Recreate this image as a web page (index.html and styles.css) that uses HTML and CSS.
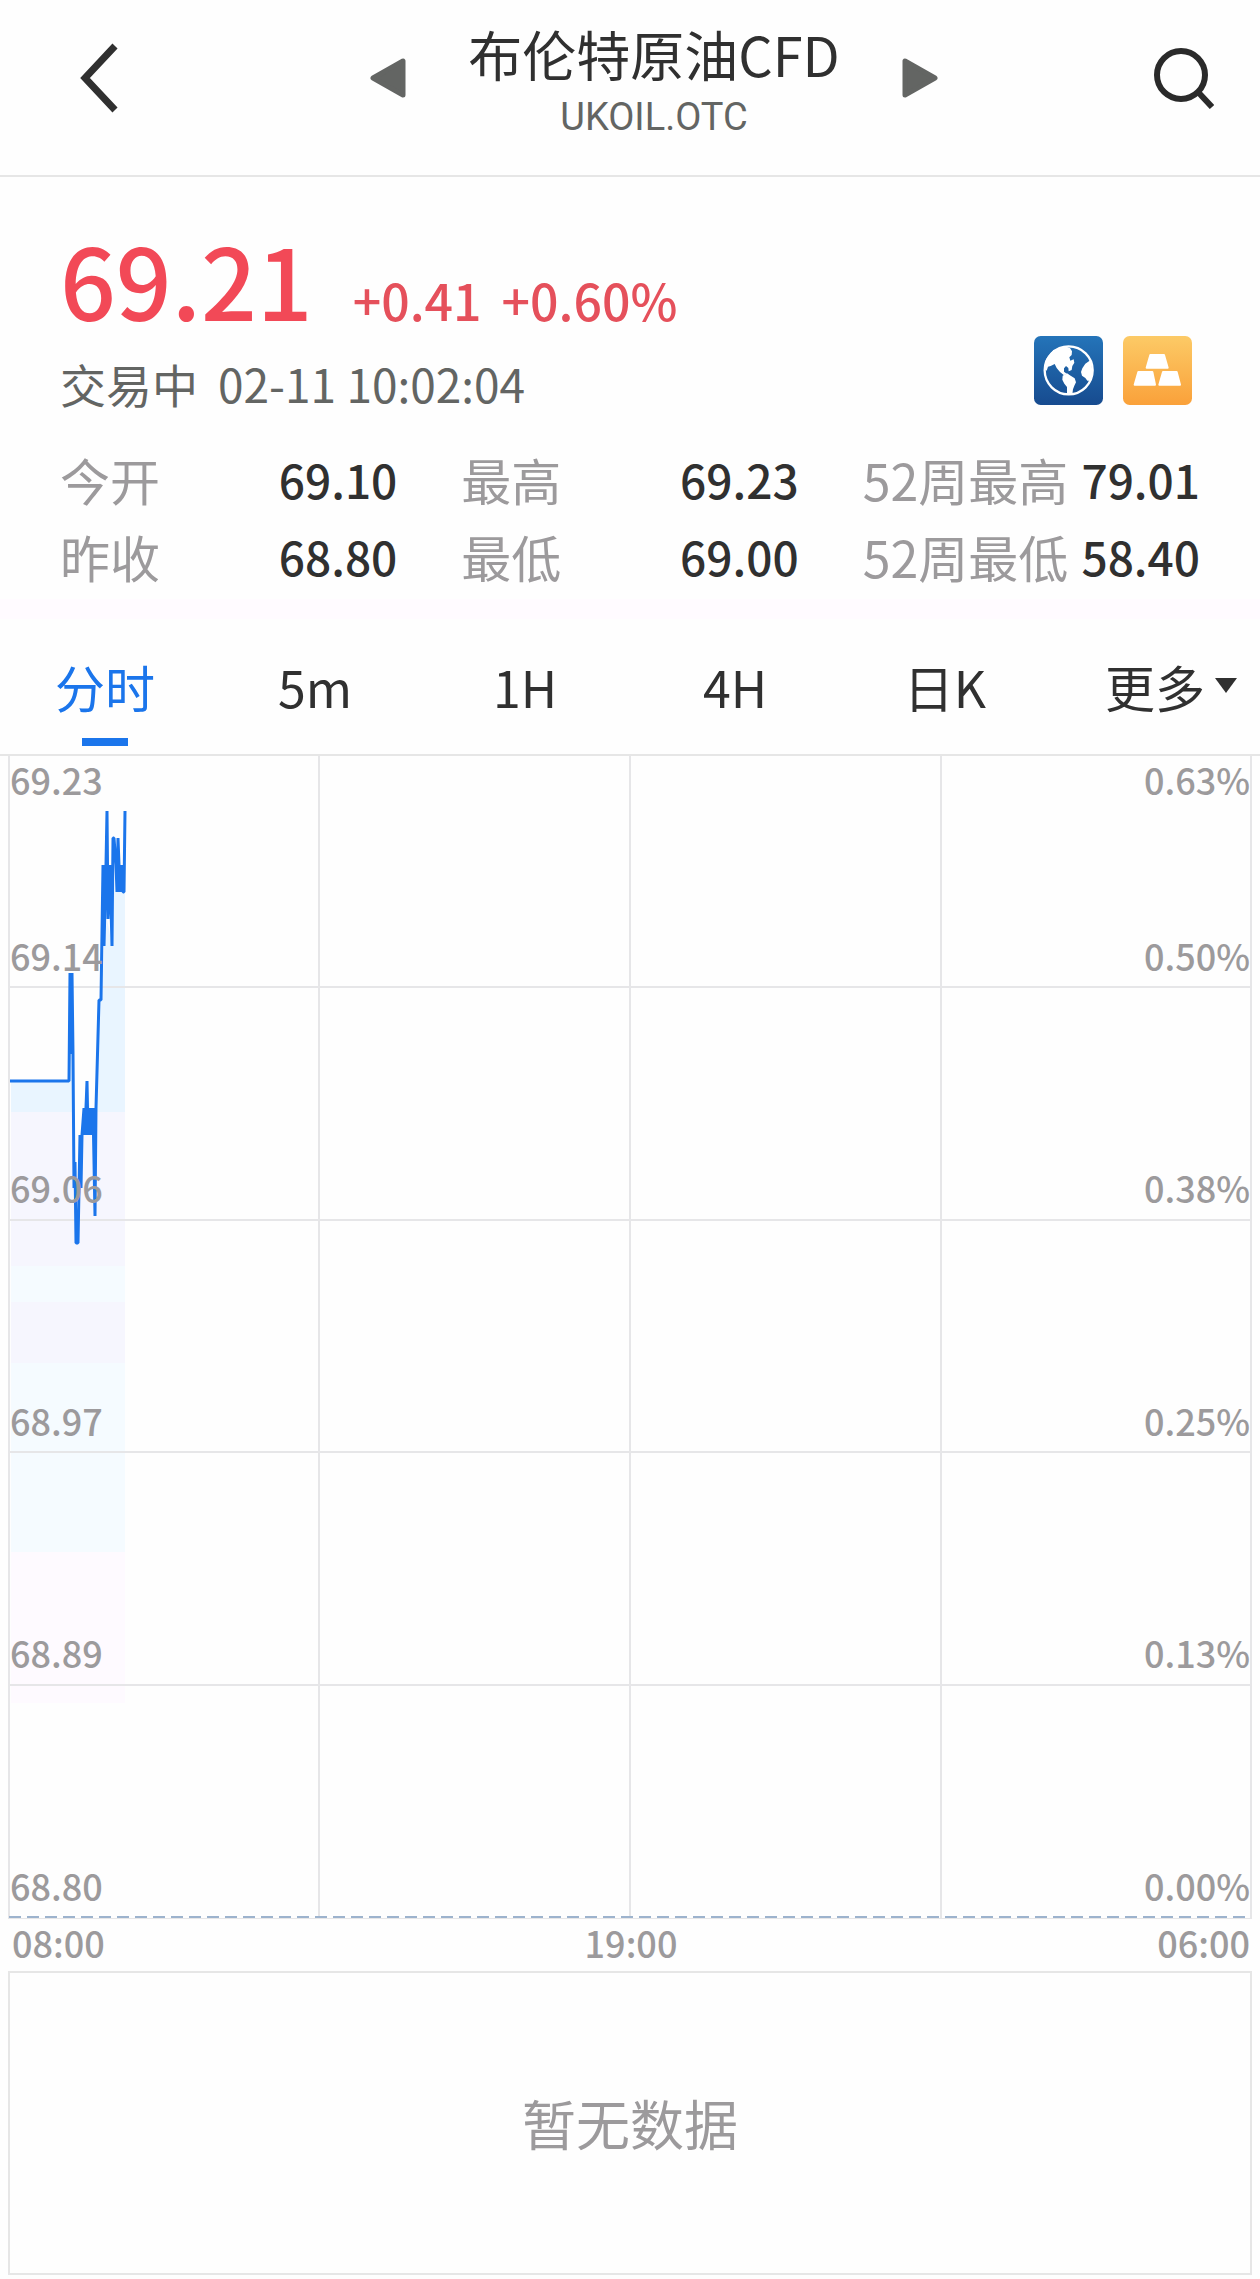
FILE: index.html
```html
<!DOCTYPE html>
<html lang="zh-CN">
<head>
    <meta charset="UTF-8">
    <meta name="viewport" content="width=device-width, initial-scale=1.0">
    <title>布伦特原油CFD</title>
    <link rel="stylesheet" href="styles.css">
</head>
<body>

<header class="header">
    <button type="button" class="icon-button back" aria-label="返回">
        <svg width="40" height="70" viewBox="0 0 40 70"><path d="M35 3 L5 35 L35 67" fill="none" stroke="#303030" stroke-width="7"/></svg>
    </button>
    <div class="switcher">
        <button type="button" class="icon-button" aria-label="上一个">
            <svg width="36" height="40" viewBox="0 0 36 40"><path d="M33 3 V37 L3 20 Z" fill="#636563" stroke="#636563" stroke-width="5" stroke-linejoin="round"/></svg>
        </button>
        <div class="title">
            <h1>布伦特原油CFD</h1>
            <p>UKOIL.OTC</p>
        </div>
        <button type="button" class="icon-button" aria-label="下一个">
            <svg width="36" height="40" viewBox="0 0 36 40"><path d="M3 3 V37 L33 20 Z" fill="#636563" stroke="#636563" stroke-width="5" stroke-linejoin="round"/></svg>
        </button>
    </div>
    <button type="button" class="icon-button" aria-label="搜索">
        <svg width="60" height="62" viewBox="0 0 60 62"><g fill="none" stroke="#2a2a2a" stroke-width="6"><circle cx="27" cy="28" r="24"/><path d="M44 45 L58 60"/></g></svg>
    </button>
</header>

<section class="quote">
    <div class="summary">
        <div>
            <div class="price-row">
                <span class="price">69.21</span>
                <span class="change">+0.41</span>
                <span class="change">+0.60%</span>
            </div>
            <div class="status">
                <span>交易中</span>
                <span>02-11 10:02:04</span>
            </div>
        </div>
        <div class="badges">
            <svg width="69" height="69" viewBox="0 0 207 207">
                <defs>
                    <linearGradient id="blue" x1="0" y1="0" x2="0" y2="1"><stop offset="0" stop-color="#2474b9"/><stop offset="1" stop-color="#174b8f"/></linearGradient>
                </defs>
                <rect width="207" height="207" rx="20" fill="url(#blue)"/>
                <circle cx="104" cy="103" r="72" fill="none" stroke="#fff" stroke-width="7"/>
                <g fill="#fff">
                    <path d="M32 100 L36 70 L58 42 L92 31 L108 36 L114 46 L113 57 L106 64 L109 74 L119 70 L121 80 L115 90 L113 102 L104 106 L103 96 L96 90 L90 97 L90 107 L98 113 L90 118 L78 108 L68 96 L62 84 L50 90 L42 92 L38 104 Z"/>
                    <path d="M86 119 L99 112 L110 119 L122 127 L126 139 L121 149 L117 160 L115 175 L99 174 L99 153 L91 143 L85 131 Z"/>
                    <path d="M170 72 L154 83 L145 97 L141 108 L144 119 L154 126 L160 134 L168 134 L176 111 Z"/>
                </g>
            </svg>
            <svg width="69" height="69" viewBox="0 0 207 207">
                <defs>
                    <linearGradient id="gold" x1="0" y1="0" x2="0" y2="1"><stop offset="0" stop-color="#fcca66"/><stop offset="1" stop-color="#faa13a"/></linearGradient>
                </defs>
                <rect width="207" height="207" rx="20" fill="url(#gold)"/>
                <g fill="#fff" stroke="#fff" stroke-width="6" stroke-linejoin="round">
                    <path d="M82 57 H123 L134 95 H71 Z"/>
                    <path d="M46 108 H88 L96 146 H35 Z"/>
                    <path d="M120 108 H161 L171 146 H109 Z"/>
                </g>
            </svg>
        </div>
    </div>
    <dl class="stats">
        <div><dt>今开</dt><dd>69.10</dd></div>
        <div><dt>最高</dt><dd>69.23</dd></div>
        <div><dt>52周最高</dt><dd>79.01</dd></div>
        <div><dt>昨收</dt><dd>68.80</dd></div>
        <div><dt>最低</dt><dd>69.00</dd></div>
        <div><dt>52周最低</dt><dd>58.40</dd></div>
    </dl>
</section>

<nav class="tabs">
    <button type="button" class="active">分时</button>
    <button type="button">5m</button>
    <button type="button">1H</button>
    <button type="button">4H</button>
    <button type="button">日K</button>
    <button type="button"><span class="more">更多</span></button>
</nav>

<main class="charts">
    <div class="plot">
        <svg class="lines" viewBox="0 2 1244 1163" preserveAspectRatio="none">
            <defs>
                <linearGradient id="area" gradientUnits="userSpaceOnUse" x1="0" y1="0" x2="0" y2="1000">
                    <stop offset="0.358" stop-color="#e9f5ff"/>
                    <stop offset="0.358" stop-color="#f6f6fe"/>
                    <stop offset="0.512" stop-color="#f6f6fe"/>
                    <stop offset="0.512" stop-color="#f5fbff"/>
                    <stop offset="0.548" stop-color="#f5fbff"/>
                    <stop offset="0.548" stop-color="#f6f6fe"/>
                    <stop offset="0.609" stop-color="#f6f6fe"/>
                    <stop offset="0.609" stop-color="#f5fbff"/>
                    <stop offset="0.798" stop-color="#f5fbff"/>
                    <stop offset="0.798" stop-color="#fefaff"/>
                </linearGradient>
            </defs>
            <path fill="url(#area)" d="M3 327 H61 L62 219 L64 219 L66 434 L69 489 L71 489 L73 381 L76 354 L79 327 L82 354 L87 462 L91 246 L94 246 L96 192 L99 165 L104 192 L107 111 L109 138 H117 V949 H3 Z"/>
            <g class="grid">
                <path d="M1 2 V1165 M311 2 V1165 M622 2 V1165 M933 2 V1165 M1243 2 V1165"/>
                <path d="M0 233 H1244 M0 466 H1244 M0 698 H1244 M0 931 H1244 M0 1165 H1244"/>
            </g>
            <path class="base-line" d="M1 1163 H1242"/>
            <path class="price-line" d="M2 327 H61 L62 219 L63 300 L64 219 L65 300 L66 434 L67 408 L68 489 H70 L72 381 L73 434 L74 381 L76 354 L77 381 L79 327 L80 381 L82 354 L83 381 L85 354 L87 462 L88 354 L91 246 H93 L95 111 L96 192 L98 111 L99 57 L100 165 L102 111 L104 192 L105 84 H106 L108 111 L109 138 L110 84 L112 138 L114 111 L115 138 H116 L117 57"/>
        </svg>
        <div class="scale">
            <div class="band">
                <div class="marks"><span>69.23</span><span>0.63%</span></div>
                <div class="marks"><span>69.14</span><span>0.50%</span></div>
            </div>
            <div class="band"><div class="marks"><span>69.06</span><span>0.38%</span></div></div>
            <div class="band"><div class="marks"><span>68.97</span><span>0.25%</span></div></div>
            <div class="band"><div class="marks"><span>68.89</span><span>0.13%</span></div></div>
            <div class="band"><div class="marks"><span>68.80</span><span>0.00%</span></div></div>
        </div>
    </div>
    <div class="times"><span>08:00</span><span>19:00</span><span>06:00</span></div>
    <div class="volume">暂无数据</div>
</main>

</body>
</html>
```
FILE: styles.css
```css
* {
    box-sizing: border-box;
}

body {
    margin: 0;
    background: #fefefe;
    color: #303030;
    font-family: "Noto Sans CJK SC", sans-serif;
}

h1, p, dl, dd {
    margin: 0;
}

button {
    padding: 0;
    border: 0;
    background: none;
    color: inherit;
    font: inherit;
    cursor: pointer;
}

svg {
    display: block;
}

/* Header */
.header {
    display: flex;
    align-items: center;
    height: 177px;
    padding: 0 46px 20px 80px;
    border-bottom: 2px solid #e6e6e6;
}

.icon-button {
    flex: none;
}

.back {
    width: 74px;
}

.switcher {
    flex: 1;
    display: flex;
    align-items: center;
    justify-content: center;
    gap: 62px;
}

.title {
    text-align: center;
}

.title h1 {
    font-size: 54px;
    font-weight: 400;
    line-height: 78px;
}

.title p {
    color: #636563;
    font-family: Roboto, sans-serif;
    font-size: 38px;
    line-height: 48px;
}

/* Quote */
.quote {
    padding: 46px 60px 4px;
    border-bottom: 20px solid #fffbff;
}

.summary {
    display: flex;
    align-items: flex-end;
    justify-content: space-between;
}

.price-row {
    display: flex;
    align-items: baseline;
    gap: 20px;
    color: #f24957;
    font-weight: 500;
    line-height: 110px;
}

.price {
    margin-right: 20px;
    font-size: 98px;
}

.change {
    color: #e5505b;
    font-size: 50px;
    line-height: 60px;
}

.status {
    display: flex;
    gap: 20px;
    margin-top: 22px;
    color: #636563;
    font-size: 46px;
    line-height: 56px;
}

.badges {
    display: flex;
    gap: 20px;
    padding: 0 8px 6px 0;
}

.stats {
    display: grid;
    grid-template-columns: repeat(3, 1fr);
    column-gap: 64px;
    margin-top: 30px;
    line-height: 77px;
}

.stats div {
    display: flex;
    justify-content: space-between;
    white-space: nowrap;
}

.stats dt {
    color: #9c9a9c;
    font-size: 50px;
}

.stats dd {
    font-size: 46px;
    font-weight: 500;
}

/* Tabs */
.tabs {
    display: grid;
    grid-template-columns: repeat(6, 1fr);
    border-bottom: 2px solid #e6e6e6;
}

.tabs button {
    position: relative;
    padding: 32px 0 33px;
    font-size: 50px;
    line-height: 70px;
}

.tabs .active {
    color: #1b75eb;
}

.tabs .active::after {
    content: "";
    position: absolute;
    bottom: 8px;
    left: 50%;
    width: 46px;
    height: 8px;
    margin-left: -23px;
    background: #1b75eb;
}

.more {
    position: relative;
}

.more::after {
    content: "";
    position: absolute;
    top: 50%;
    left: 100%;
    margin: -8px 0 0 10px;
    border: 11px solid transparent;
    border-top: 15px solid #303030;
    border-bottom: 0;
}

/* Charts */
.charts {
    padding: 0 8px 5px;
    color: #9c9a9c;
    font-size: 36px;
    line-height: 46px;
}

.plot {
    display: grid;
}

.lines,
.scale {
    grid-area: 1 / 1;
}

.lines {
    width: 100%;
    height: 1163px;
}

.lines path {
    vector-effect: non-scaling-stroke;
}

.grid {
    fill: none;
    stroke: #e6e6e8;
    stroke-width: 2;
}

.base-line {
    stroke: #9db3cd;
    stroke-width: 2;
    stroke-dasharray: 12 6;
}

.price-line {
    fill: none;
    stroke: #1b75eb;
    stroke-width: 3;
    stroke-linejoin: bevel;
}

.scale {
    display: flex;
    flex-direction: column;
    z-index: 1;
    padding: 0 2px;
    font-weight: 500;
}

.band {
    flex: 1;
    display: flex;
    flex-direction: column;
    justify-content: space-between;
    padding-bottom: 11px;
}

.band .marks:only-child {
    margin-top: auto;
}

.marks,
.times {
    display: flex;
    justify-content: space-between;
}

.times {
    padding: 0 2px 6px 4px;
    font-weight: 500;
}

.volume {
    display: flex;
    align-items: center;
    justify-content: center;
    height: 304px;
    border: 2px solid #e6e6e6;
    font-size: 54px;
}
```
